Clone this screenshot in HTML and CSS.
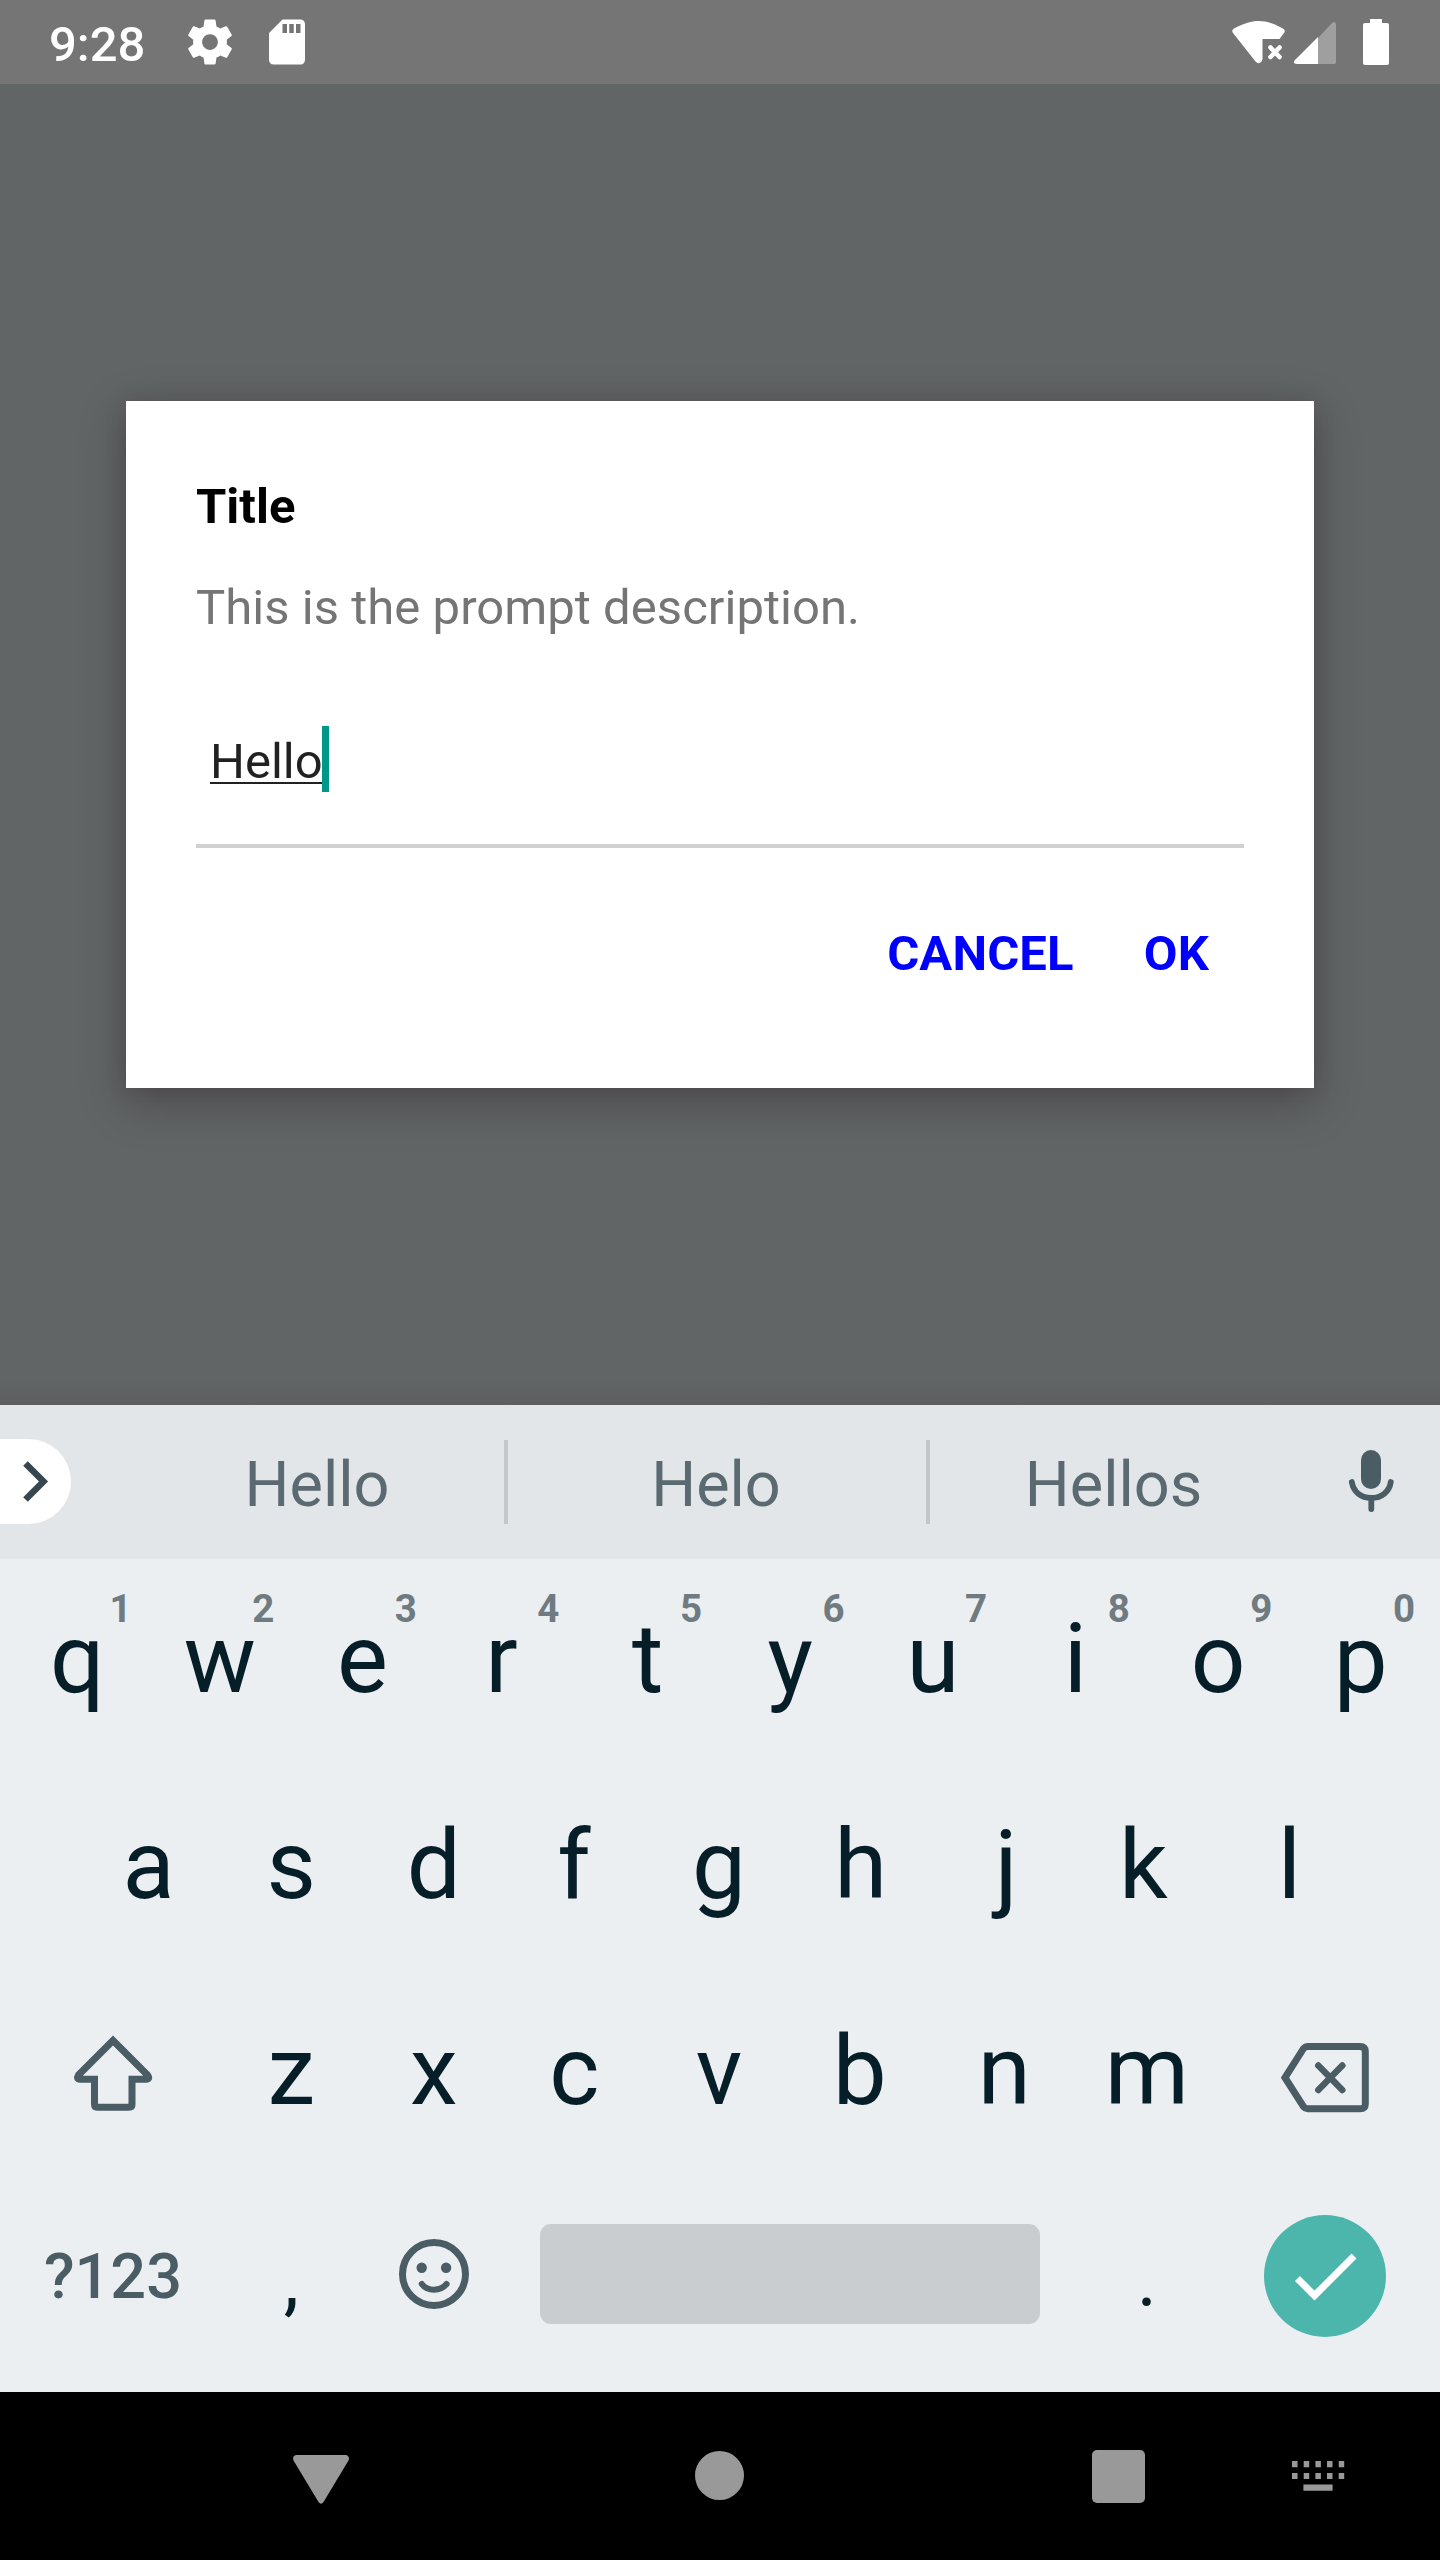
FILE: index.html
```html
<!DOCTYPE html>
<html lang="en">
<head>
<meta charset="utf-8">
<title>Prompt</title>
<link rel="stylesheet" href="styles.css">
</head>
<body>
<div class="screen">
  <header class="status">
    <span class="clock">9:28</span>
    <svg class="ic-gear" width="54" height="54" viewBox="0 0 24 24"><path fill="#fff" d="M19.43 12.98c.04-.32.07-.64.07-.98s-.03-.66-.07-.98l2.11-1.65c.19-.15.24-.42.12-.64l-2-3.46c-.12-.22-.39-.3-.61-.22l-2.49 1c-.52-.4-1.08-.73-1.69-.98l-.38-2.65C14.46 2.18 14.25 2 14 2h-4c-.25 0-.46.18-.49.42l-.38 2.65c-.61.25-1.17.59-1.69.98l-2.49-1c-.23-.09-.49 0-.61.22l-2 3.46c-.13.22-.07.49.12.64l2.11 1.65c-.04.32-.07.65-.07.98s.03.66.07.98l-2.11 1.65c-.19.15-.24.42-.12.64l2 3.46c.12.22.39.3.61.22l2.49-1c.52.4 1.08.73 1.69.98l.38 2.65c.03.24.24.42.49.42h4c.25 0 .46-.18.49-.42l.38-2.65c.61-.25 1.17-.59 1.69-.98l2.49 1c.23.09.49 0 .61-.22l2-3.46c.12-.22.07-.49-.12-.64l-2.11-1.65zM12 15.5c-1.93 0-3.5-1.57-3.5-3.5s1.57-3.5 3.5-3.5 3.5 1.57 3.5 3.5-1.57 3.5-3.5 3.5z"/></svg>
    <svg class="ic-sd" width="54" height="54" viewBox="0 0 24 24"><path fill="#fff" d="M18 2h-8L4.02 8 4 20c0 1.100.9 2 2 2h12c1.100 0 2-.9 2-2V4c0-1.100-.9-2-2-2zm-6 6h-2V4h2v4zm3 0h-2V4h2v4zm3 0h-2V4h2v4z"/></svg>
    <span class="spacer"></span>
    <svg class="ic-wifi" width="56" height="46" viewBox="1231 18 56 46"><path fill="#fff" d="M1233 32Q1231 29.500 1234 27.500C1245 22 1251 20 1258.500 20S1273 22 1283 27.500Q1286 29.500 1284 32L1279.500 38H1262.500V58.500Q1261 62.300 1258.500 62.300Q1257 62.300 1255.500 60.500Z"/><path stroke="#fff" stroke-width="4.600" stroke-linecap="round" d="M1270.500 46.500L1279.500 56M1279.500 46.500L1270.500 56"/></svg>
    <svg class="ic-cell" width="44" height="44" viewBox="1293 21 44 44"><path fill="#9f9f9f" d="M1318 38L1332 23Q1336 20.500 1336 25V62Q1336 64 1334 64H1318Z"/><path fill="#fff" d="M1318 37V64H1297Q1292.500 64 1294.500 60.500Z"/></svg>
    <svg class="ic-batt" width="26" height="46" viewBox="0 0 26 46"><path fill="#fff" d="M7 0H19V4H24Q26 4 26 6V44Q26 46 24 46H2Q0 46 0 44V6Q0 4 2 4H7Z"/></svg>
  </header>

  <main class="scene">
    <section class="dialog">
      <h1 class="title">Title</h1>
      <p class="desc">This is the prompt description.</p>
      <div class="input"><span class="value">Hello</span><span class="caret"></span></div>
      <div class="actions"><span class="btn">CANCEL</span><span class="btn">OK</span></div>
    </section>
  </main>

  <section class="strip">
    <div class="pill"><svg width="70" height="86" viewBox="0 1439 70 86"><path fill="none" stroke="#37474f" stroke-width="6.500" d="M25.500 1463.500L43.500 1481.500L25.500 1499.500"/></svg></div>
    <span class="word w1">Hello</span><i class="bar"></i><span class="word w2">Helo</span><i class="bar"></i><span class="word w3">Hellos</span>
    <div class="mic"><svg width="50" height="66" viewBox="1346 1448 50 66"><rect x="1361" y="1450" width="20" height="39" rx="10" fill="#4a5c64"/><path fill="none" stroke="#4a5c64" stroke-width="5.800" stroke-linecap="round" d="M1351.800 1482C1353.500 1492 1361 1498 1371.300 1498S1389.200 1492 1390.800 1482M1371.300 1499V1509"/></svg></div>
  </section>

  <section class="keys">
    <div class="row">
      <div class="key">q<sup>1</sup></div><div class="key">w<sup>2</sup></div><div class="key">e<sup>3</sup></div><div class="key left-4">r<sup>4</sup></div><div class="key">t<sup>5</sup></div><div class="key">y<sup>6</sup></div><div class="key">u<sup>7</sup></div><div class="key">i<sup>8</sup></div><div class="key">o<sup>9</sup></div><div class="key">p<sup>0</sup></div>
    </div>
    <div class="row">
      <div class="key">a</div><div class="key">s</div><div class="key">d</div><div class="key left-3">f</div><div class="key">g</div><div class="key left-1">h</div><div class="key right-2">j</div><div class="key left-4">k</div><div class="key">l</div>
    </div>
    <div class="row">
      <div class="key wide"><svg class="ic-shift" width="84" height="84" viewBox="71 2032 84 84"><path fill="none" stroke="#4a5c64" stroke-width="7" d="M113 2040.500L78.500 2075Q76 2079.200 80 2079.200H94.500V2104.500Q94.500 2107.200 97 2107.200H129Q132 2107.200 132 2104.500V2079.200H146Q150.500 2079.200 147.500 2075Z"/></svg></div>
      <div class="key">z</div><div class="key">x</div><div class="key left-2">c</div><div class="key">v</div><div class="key left-2">b</div><div class="key">n</div><div class="key">m</div>
      <div class="key wide"><svg class="ic-back" width="92" height="76" viewBox="1278 2040 92 76"><path fill="none" stroke="#4a5c64" stroke-width="7" d="M1284 2077.700L1302.500 2048.500Q1304.300 2046.500 1306.500 2046.500H1359Q1364.300 2046.500 1364.300 2051.500V2104Q1364.300 2108.700 1359 2108.700H1306.500Q1304.300 2108.700 1302.500 2106.700Z"/><path stroke="#4a5c64" stroke-width="6.500" stroke-linecap="round" d="M1317.300 2065.500L1341.300 2090M1341.300 2065.500L1317.300 2090"/></svg></div>
    </div>
    <div class="row">
      <div class="key wide mode">?123</div>
      <div class="key punct">,</div>
      <div class="key"><svg class="ic-smile" width="72" height="72" viewBox="397 2238 72 72"><circle cx="433" cy="2274" r="31.500" fill="none" stroke="#4a5c64" stroke-width="7"/><circle cx="420.700" cy="2267.700" r="5.200" fill="#4a5c64"/><circle cx="445.100" cy="2267.700" r="5.200" fill="#4a5c64"/><path fill="none" stroke="#4a5c64" stroke-width="6" stroke-linecap="round" d="M420.800 2284Q425 2289.700 433 2289.700T445.600 2284"/></svg></div>
      <div class="key space"><span class="spacebar"></span></div>
      <div class="key punct">.</div>
      <div class="key wide"><span class="enter"><svg width="84" height="84" viewBox="0 0 24 24"><path fill="#fff" d="M9 16.170L4.830 12l-1.420 1.410L9 19 21 7l-1.410-1.410z"/></svg></span></div>
    </div>
  </section>

  <nav class="nav">
    <svg class="n-back" width="56" height="50" viewBox="293 2455 56 50"><path fill="#999" d="M296 2455H346Q350 2456 348.500 2460.500L323.500 2502Q321 2505.500 318.500 2502L293.500 2460.500Q292 2456 296 2455Z"/></svg>
    <span class="n-home"></span>
    <span class="n-recent"></span>
    <svg class="n-ime" width="54" height="30" viewBox="1291 2461 54 30"><path fill="#999" d="M1292 2461h5.500v6.300h-5.500zM1303.700 2461h5.500v6.300h-5.500zM1315.400 2461h5.500v6.300h-5.500zM1327 2461h5.500v6.300h-5.500zM1338.700 2461h5.500v6.300h-5.500zM1292 2473h5.500v6h-5.500zM1303.700 2473h5.500v6h-5.500zM1315.400 2473h5.500v6h-5.500zM1327 2473h5.500v6h-5.500zM1338.700 2473h5.500v6h-5.500zM1303.400 2484.500h29.200v6.200h-29.200z"/></svg>
  </nav>
</div>
</body>
</html>
```
FILE: styles.css
```css
* { box-sizing: border-box; }
body { margin: 0; font-family: Roboto, "Liberation Sans", sans-serif; }
svg { display: block; flex: none; }
.screen { width: 1440px; height: 2560px; display: flex; flex-direction: column; overflow: hidden; }

/* status bar */
.status { height: 84px; flex: none; background: #757575; color: #fff; display: flex; align-items: center; padding: 0 51px 0 49px; }
.clock { font-size: 49px; font-weight: 500; line-height: 58px; padding-top: 5px; width: 96px; white-space: nowrap; }
.ic-gear { margin-left: 37.5px; }
.ic-sd { margin-left: 23.5px; }
.spacer { flex: 1; }
.ic-wifi { margin-right: 6px; }
.ic-cell { margin: 2px 26px 0 0; }

/* dimmed page with the prompt */
.scene { height: 1321px; flex: none; background: linear-gradient(to bottom, rgba(88, 85, 85, 0) 1296px, #5e5e5f 1321px), #616565; padding: 317px 126px 0; }
.dialog { height: 687px; background: #fff; padding: 77px 70px 0; box-shadow: 0 14px 40px rgba(50, 38, 42, .42), 0 0 18px rgba(60, 45, 50, .18); }
.title { margin: 0; font-size: 49px; line-height: 58px; font-weight: 700; color: #000; }
.desc { margin: 43px 0 0; font-size: 49px; line-height: 58px; letter-spacing: .04px; color: #757575; }
.input { margin-top: 89px; height: 122px; padding: 0 0 52px 14px; border-bottom: 4px solid #d1d1d1; display: flex; align-items: center; }
.value { font-size: 49px; line-height: 58px; color: #212121; padding-top: 5px; text-decoration: underline; text-decoration-thickness: 2px; text-underline-offset: 4px; text-decoration-skip-ink: none; }
.caret { width: 7px; height: 66px; background: #009688; margin-left: -1px; }
.actions { margin-top: 77px; display: flex; justify-content: flex-end; gap: 70px; padding-right: 35px; }
.btn { font-size: 49px; line-height: 58px; font-weight: 700; letter-spacing: .15px; color: #00f; }

/* suggestion strip */
.strip { height: 154px; flex: none; background: #e2e6e9; display: flex; align-items: center; }
.pill { width: 71px; height: 85px; background: #fff; border-radius: 0 43px 43px 0; margin: -1px 57px 0 0; }
.word { font-size: 63px; line-height: 74px; color: #5b6a71; text-align: center; padding-top: 5px; }
.w1 { width: 376px; padding-left: 2px; }
.w2 { width: 418px; padding-right: 2px; }
.w3 { width: 366px; padding-left: 1px; }
.bar { width: 4px; height: 84px; background: #c2c7ca; }
.mic { margin: -2px 0 0 50px; }

/* keyboard */
.keys { height: 833px; flex: none; background: #ebeff2; }
.row { height: 206px; display: flex; justify-content: center; padding-right: 2px; }
.key { position: relative; width: 142.6px; height: 206px; padding-bottom: 7px; display: flex; align-items: center; justify-content: center; font-size: 96px; line-height: 114px; color: #061e27; }
.key sup { position: absolute; top: 27px; right: 17px; font-size: 38.5px; line-height: 46px; font-weight: 700; color: #6f7b81; }
.left-1 { padding-right: 2px; }
.left-2 { padding-right: 4px; }
.left-3 { padding-right: 5px; }
.left-4 { padding-right: 7px; }
.right-2 { padding-left: 4px; }
.wide { width: 213.9px; }
.mode { font-size: 63px; font-weight: 500; color: #4a5c64; }
.punct { font-size: 77px; padding-bottom: 0; }
.space { width: 570.4px; }
.spacebar { width: 500px; height: 100px; border-radius: 11px; background: #c9cdd0; margin-top: -5px; }
.enter { width: 122px; height: 122px; border-radius: 50%; background: #4db6ac; display: flex; align-items: center; justify-content: center; margin-top: -1px; }
.ic-shift { margin-top: 7px; }
.ic-back { margin-top: 15px; }
.ic-smile { margin-top: -5px; }

/* navigation bar */
.nav { height: 168px; flex: none; background: #000; display: flex; align-items: center; padding-left: 293px; }
.n-back { margin-top: 7px; }
.n-home { width: 49px; height: 49px; border-radius: 50%; background: #999; margin: -1px 0 0 346px; }
.n-recent { width: 53px; height: 53px; border-radius: 5px; background: #999; margin-left: 348px; }
.n-ime { margin-left: 146px; }
```
